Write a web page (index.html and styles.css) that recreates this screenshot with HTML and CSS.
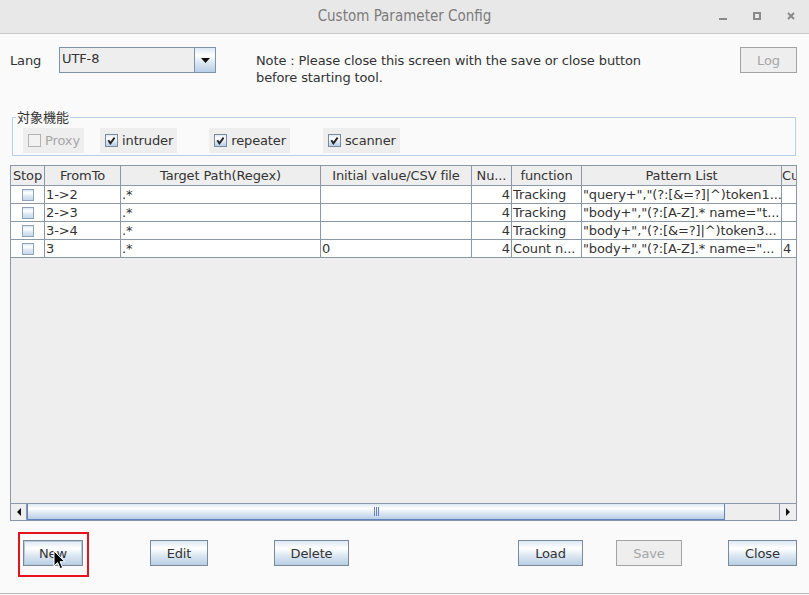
FILE: index.html
```html
<!DOCTYPE html>
<html lang="en">
<head>
<meta charset="utf-8">
<title>Custom Parameter Config</title>
<link rel="stylesheet" href="styles.css">
</head>
<body>
<div class="window">
  <div class="titlebar">
    <div class="title-spacer"></div>
    <div class="title">Custom Parameter Config</div>
    <div class="wm-buttons">
      <span class="wm-min"></span>
      <span class="wm-max"></span>
      <svg class="wm-close" width="8" height="8" viewBox="0 0 8 8"><path d="M1 1 L7 7 M7 1 L1 7" stroke="#8a8a8a" stroke-width="2" fill="none"/></svg>
    </div>
  </div>

  <div class="top-row">
    <span class="lang-label">Lang</span>
    <div class="combo">
      <span class="combo-text">UTF-8</span>
      <span class="combo-btn"><svg width="9" height="5" viewBox="0 0 9 5"><path d="M0 0 H9 L4.5 5 Z" fill="#111"/></svg></span>
    </div>
    <p class="note">Note : Please close this screen with the save or close button<br>before starting tool.</p>
    <button class="btn btn-disabled btn-log" disabled>Log</button>
  </div>

  <fieldset class="group">
    <legend>対象機能</legend>
    <label class="chk chk-disabled"><span class="box"></span>Proxy</label>
    <label class="chk chk-intruder"><span class="box"><svg width="11" height="11" viewBox="0 0 11 11"><path d="M2.3 5.2 L4.4 8.3 L8.6 2.6" stroke="#222" stroke-width="1.9" fill="none"/></svg></span>intruder</label>
    <label class="chk chk-repeater"><span class="box"><svg width="11" height="11" viewBox="0 0 11 11"><path d="M2.3 5.2 L4.4 8.3 L8.6 2.6" stroke="#222" stroke-width="1.9" fill="none"/></svg></span>repeater</label>
    <label class="chk chk-scanner"><span class="box"><svg width="11" height="11" viewBox="0 0 11 11"><path d="M2.3 5.2 L4.4 8.3 L8.6 2.6" stroke="#222" stroke-width="1.9" fill="none"/></svg></span>scanner</label>
  </fieldset>

  <div class="table-frame">
    <div class="viewport">
      <table class="grid">
        <colgroup>
          <col class="c-stop"><col class="c-from"><col class="c-target"><col class="c-init"><col class="c-num"><col class="c-func"><col class="c-pat"><col class="c-cu">
        </colgroup>
        <thead>
          <tr><th>Stop</th><th>FromTo</th><th>Target Path(Regex)</th><th>Initial value/CSV file</th><th>Nu...</th><th>function</th><th>Pattern List</th><th class="th-cu">Cu...</th></tr>
        </thead>
        <tbody>
          <tr><td class="cb-cell"><span class="tcb"></span></td><td>1-&gt;2</td><td>.*</td><td></td><td class="num">4</td><td>Tracking</td><td>"query+","(?:[&amp;=?]|^)token1...</td><td></td></tr>
          <tr><td class="cb-cell"><span class="tcb"></span></td><td>2-&gt;3</td><td>.*</td><td></td><td class="num">4</td><td>Tracking</td><td>"body+","(?:[A-Z].* name="t...</td><td></td></tr>
          <tr><td class="cb-cell"><span class="tcb"></span></td><td>3-&gt;4</td><td>.*</td><td></td><td class="num">4</td><td>Tracking</td><td>"body+","(?:[&amp;=?]|^)token3...</td><td></td></tr>
          <tr><td class="cb-cell"><span class="tcb"></span></td><td>3</td><td>.*</td><td>0</td><td class="num">4</td><td>Count n...</td><td>"body+","(?:[A-Z].* name="...</td><td>4</td></tr>
        </tbody>
      </table>
    </div>
    <div class="filler"></div>
    <div class="hscroll">
      <span class="sb-btn sb-left"><svg width="4" height="8" viewBox="0 0 4 8"><path d="M4 0 V8 L0 4 Z" fill="#111"/></svg></span>
      <span class="sb-thumb"><span class="grip"></span><span class="grip"></span><span class="grip"></span></span>
      <span class="sb-track"></span>
      <span class="sb-btn sb-right"><svg width="4" height="8" viewBox="0 0 4 8"><path d="M0 0 V8 L4 4 Z" fill="#111"/></svg></span>
    </div>
  </div>

  <div class="button-row">
    <div class="highlight">
      <button class="btn btn-focus btn-new">New</button>
      <svg class="cursor" width="13" height="20" viewBox="0 0 13 20"><path d="M1 1 L1 16 L4.6 12.6 L7.2 18.6 L9.6 17.6 L7 11.7 L11.8 11.7 Z" fill="#000" stroke="#fff" stroke-width="1" stroke-linejoin="round"/></svg>
    </div>
    <button class="btn btn-edit">Edit</button>
    <button class="btn btn-delete">Delete</button>
    <button class="btn btn-load">Load</button>
    <button class="btn btn-disabled btn-save" disabled>Save</button>
    <button class="btn btn-close">Close</button>
  </div>
</div>
</body>
</html>
```
FILE: styles.css
```css
* { box-sizing: border-box; }

body {
  margin: 0;
  background: #fafafa;
  font-family: "DejaVu Sans", "Noto Sans CJK JP", sans-serif;
  font-size: 13px;
  letter-spacing: -0.12px;
  color: #333;
}

.window {
  width: 809px;
  height: 594px;
  border-bottom: 1px solid #b9b9b9;
  display: flex;
  flex-direction: column;
}

/* title bar */
.titlebar {
  height: 34px;
  flex: none;
  background: #e8e8e8;
  border-bottom: 1px solid #c9c9c9;
  display: grid;
  grid-template-columns: 1fr auto 1fr;
  align-items: center;
}
.title {
  font-family: "DejaVu Sans Condensed", "DejaVu Sans", sans-serif;
  font-stretch: condensed;
  font-size: 15px;
  letter-spacing: 0;
  color: #7b7b7b;
  padding-bottom: 2px;
}
.wm-buttons {
  justify-self: end;
  align-self: start;
  display: flex;
  gap: 26px;
  padding: 12px 14px 0 0;
}
.wm-min {
  width: 8px;
  height: 8px;
  border-bottom: 2px solid #8a8a8a;
}
.wm-max {
  width: 8px;
  height: 8px;
  border: 2px solid #8a8a8a;
}
.wm-close { display: block; }

/* top row */
.top-row {
  display: flex;
  align-items: flex-start;
  margin: 13px 12px 0 10px;
}
.lang-label {
  width: 49px;
  line-height: 27px;
}
.combo {
  width: 157px;
  height: 26px;
  display: flex;
  border: 1px solid #7d92ab;
  background: #eeeeee;
}
.combo-text {
  flex: 1;
  padding-left: 2px;
  line-height: 22px;
}
.combo-btn {
  width: 21px;
  border-left: 1px solid #7d92ab;
  background: linear-gradient(#dde8f3 0%, #ffffff 30%, #dde8f3 60%, #b8cfe5 100%);
  display: flex;
  align-items: center;
  justify-content: center;
}
.combo-btn svg { display: block; margin-top: 1px; }
.note {
  margin: 5px 0 0 40px;
  line-height: 17px;
}

/* buttons */
.btn {
  height: 26px;
  padding: 0;
  font-family: inherit;
  font-size: 13px;
  letter-spacing: -0.12px;
  color: #333;
  border: 1px solid #7a8a99;
  background: linear-gradient(#dde8f3 0%, #ffffff 30%, #dde8f3 60%, #b8cfe5 100%);
}
.btn-disabled {
  color: #a6a6a6;
  border-color: #a3a3a3;
  background: #eeeeee;
}
.btn-log {
  width: 57px;
  margin-left: auto;
}
.btn-focus {
  box-shadow: inset 0 0 0 1px #b7cadd;
}

/* group */
.group {
  margin: 23px 13px 0 12px;
  border: 1px solid #b8cfe5;
  padding: 0 0 2px 3px;
  display: flex;
  min-width: 0;
}
.group legend {
  padding: 0 1px;
  line-height: 16px;
  font-size: 13px;
  letter-spacing: 0;
  font-family: "Noto Sans CJK JP", "DejaVu Sans", sans-serif;
  color: #333;
}
.chk {
  height: 25px;
  margin-top: 3px;
  display: flex;
  align-items: center;
  gap: 4px;
  padding: 0 4px 0 5px;
  background: #eeeeee;
}
.chk .box {
  width: 13px;
  height: 13px;
  border: 1px solid #7a8a99;
  background: linear-gradient(#dde8f3 0%, #ffffff 30%, #dde8f3 60%, #b8cfe5 100%);
  display: flex;
  align-items: center;
  justify-content: center;
}
.chk .box svg { display: block; }
.chk-disabled { margin-left: 7px; color: #a6a6a6; }
.chk-disabled .box { border-color: #b3b3b3; background: #f2f2f2; }
.chk-intruder { margin-left: 16px; }
.chk-repeater { margin-left: 32px; }
.chk-scanner { margin-left: 33px; }

/* table */
.table-frame {
  margin: 9px 12px 0 10px;
  height: 356px;
  border: 1px solid #8b98a8;
  display: flex;
  flex-direction: column;
  background: #eeeeee;
}
.viewport {
  overflow: hidden;
  flex: none;
}
.grid {
  table-layout: fixed;
  width: 801px;
  border-collapse: separate;
  border-spacing: 0;
}
.c-stop { width: 34px; }
.c-from { width: 76px; }
.c-target { width: 200px; }
.c-init { width: 151px; }
.c-num { width: 40px; }
.c-func { width: 70px; }
.c-pat { width: 200px; }
.c-cu { width: 30px; }

.grid th, .grid td {
  border-right: 1px solid #8b98a8;
  border-bottom: 1px solid #8b98a8;
  white-space: nowrap;
  overflow: hidden;
  font-weight: normal;
  color: #333;
}
.grid th {
  height: 20px;
  padding: 0;
  background: #eeeeee;
  text-align: center;
  line-height: 18px;
}
.grid td {
  height: 18px;
  padding: 0 0 0 1px;
  background: #ffffff;
  line-height: 17px;
}
.grid td.num { text-align: right; padding: 0 1px 0 0; }
.grid td.cb-cell { padding: 0; text-align: center; }
.tcb {
  display: block;
  width: 12px;
  height: 12px;
  margin: 0 auto;
  border: 1px solid #8ea2b8;
  background: linear-gradient(#dde8f3 0%, #ffffff 30%, #dde8f3 60%, #c6d8eb 100%);
}
.th-cu { text-align: left; }

.filler { flex: 1; }

.hscroll {
  height: 17px;
  flex: none;
  display: flex;
  border-top: 1px solid #8b98a8;
}
.sb-btn {
  width: 16px;
  background: #eeeeee;
  display: flex;
  align-items: center;
  justify-content: center;
}
.sb-left { border-right: 1px solid #8b98a8; }
.sb-right { width: 17px; border-left: 1px solid #8b98a8; }
.sb-thumb {
  width: 698px;
  border: 1px solid #6382bf;
  border-top: none;
  background: linear-gradient(#dde8f3 0%, #ffffff 30%, #dde8f3 60%, #b8cfe5 100%);
  display: flex;
  align-items: center;
  justify-content: center;
  gap: 1px;
}
.grip {
  width: 1px;
  height: 9px;
  background: #6382bf;
}
.sb-track {
  flex: 1;
  background: #eeeeee;
}

/* bottom buttons */
.button-row {
  display: flex;
  align-items: flex-start;
  margin: 11px 12px 0 0;
}
.highlight {
  position: relative;
  margin-left: 18px;
  border: 2px solid #e3141c;
  padding: 6px 4px 9px 3px;
}
.btn-new { width: 60px; display: block; }
.cursor {
  position: absolute;
  left: 33px;
  top: 16px;
}
.btn-edit { width: 58px; margin: 8px 0 0 61px; }
.btn-delete { width: 75px; margin: 8px 0 0 66px; }
.btn-load { width: 65px; margin: 8px 0 0 169px; }
.btn-save { width: 66px; margin: 8px 0 0 33px; }
.btn-close { width: 69px; margin: 8px 0 0 46px; }
```
